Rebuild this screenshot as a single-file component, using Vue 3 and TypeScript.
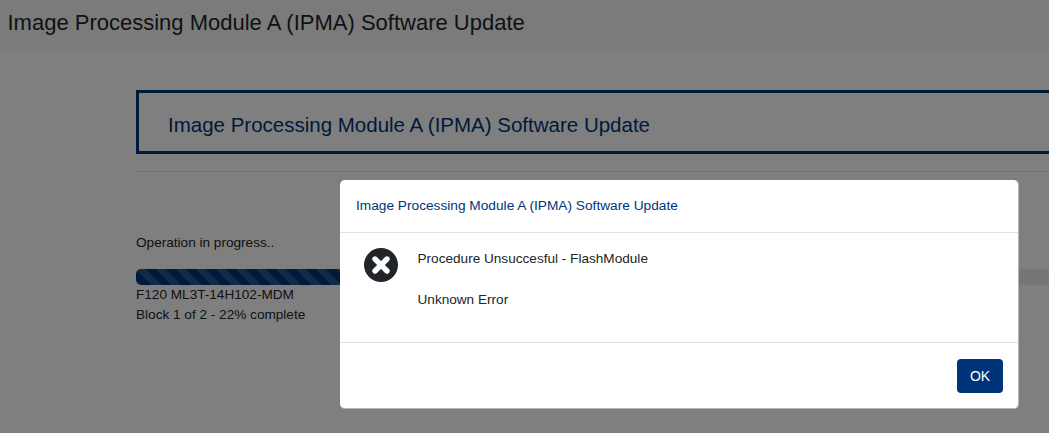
<script setup lang="ts">
const title = 'Image Processing Module A (IPMA) Software Update'
const percent = 22
</script>

<template>
  <div class="page">
    <header class="topbar">{{ title }}</header>
    <main class="content">
      <h1 class="banner">{{ title }}</h1>
      <hr class="rule" />
      <p class="status">Operation in progress..</p>
      <div class="track">
        <div class="fill" :style="{ width: percent + '%' }"></div>
      </div>
      <p class="line">F120 ML3T-14H102-MDM</p>
      <p class="line">Block 1 of 2 - {{ percent }}% complete</p>
    </main>
    <div class="backdrop"></div>
    <section class="modal">
      <div class="modal-head">{{ title }}</div>
      <div class="modal-body">
        <svg class="err" viewBox="0 0 34 34" aria-hidden="true">
          <circle cx="17" cy="17" r="17" fill="#212529" />
          <path d="M11 11 L23 23 M23 11 L11 23" stroke="#fff" stroke-width="5.4" stroke-linecap="round" fill="none" />
        </svg>
        <div class="msg">
          <p>Procedure Unsuccesful - FlashModule</p>
          <p>Unknown Error</p>
        </div>
      </div>
      <div class="modal-foot">
        <button class="ok" type="button">OK</button>
      </div>
    </section>
  </div>
</template>

<style>
html, body { margin: 0; padding: 0; overflow: hidden; }
</style>

<style scoped>
.page {
  position: relative;
  width: 1049px;
  height: 433px;
  overflow: hidden;
  background: #fff;
  color: #212529;
  font-family: "Liberation Sans", Arial, sans-serif;
  font-size: 13.6px;
}
.topbar {
  height: 50px;
  line-height: 46px;
  padding-left: 7.5px;
  background: #f7f7f7;
  font-size: 22px;
}
.content {
  width: 1000px;
  margin: 40px 0 0 136px;
}
.banner {
  box-sizing: border-box;
  height: 64px;
  margin: 0;
  padding-left: 29px;
  border: 3px solid #003478;
  color: #003478;
  font-size: 20.5px;
  font-weight: 400;
  line-height: 64px;
}
.rule {
  height: 1px;
  margin: 17px 0 0;
  border: 0;
  background: #dee2e6;
}
.status {
  margin: 62px 0 0;
  line-height: 17px;
}
.track {
  height: 16px;
  margin-top: 18px;
  border-radius: 5px;
  background: #e9ecef;
  overflow: hidden;
}
.fill {
  height: 100%;
  background-color: #003478;
  background-image: linear-gradient(45deg, rgba(255,255,255,.15) 25%, transparent 25%, transparent 50%, rgba(255,255,255,.15) 50%, rgba(255,255,255,.15) 75%, transparent 75%, transparent);
  background-size: 20px 20px;
}
.line {
  margin: 0;
  line-height: 20px;
}
.backdrop {
  position: absolute;
  inset: 0;
  background: rgba(0, 0, 0, .5);
}
.modal {
  position: absolute;
  left: 340px;
  top: 180px;
  width: 679px;
  height: 229px;
  display: flex;
  flex-direction: column;
  box-sizing: border-box;
  border-right: 1px solid #b4b4b4;
  border-bottom: 1px solid #b4b4b4;
  border-radius: 5px;
  background: #fff;
}
.modal-head {
  height: 53px;
  box-sizing: border-box;
  padding-left: 16px;
  border-bottom: 1px solid #dee2e6;
  color: #003478;
  font-size: 13.7px;
  line-height: 51px;
}
.modal-body {
  flex: 1;
  display: flex;
  gap: 20px;
  padding: 17px 24px 0;
  align-items: flex-start;
}
.err {
  width: 34px;
  height: 34px;
  flex: none;
  margin-top: -2px;
}
.msg {
  margin-left: -0.5px;
}
.msg p {
  margin: 0 0 24px;
  line-height: 17px;
}
.modal-foot {
  height: 66px;
  box-sizing: border-box;
  display: flex;
  justify-content: flex-end;
  padding: 16px 15px 0 0;
  border-top: 1px solid #dee2e6;
}
.ok {
  width: 46px;
  height: 34px;
  padding: 0;
  border: 0;
  border-radius: 4px;
  background: #003478;
  color: #fff;
  font-family: inherit;
  font-size: 14px;
}
</style>
